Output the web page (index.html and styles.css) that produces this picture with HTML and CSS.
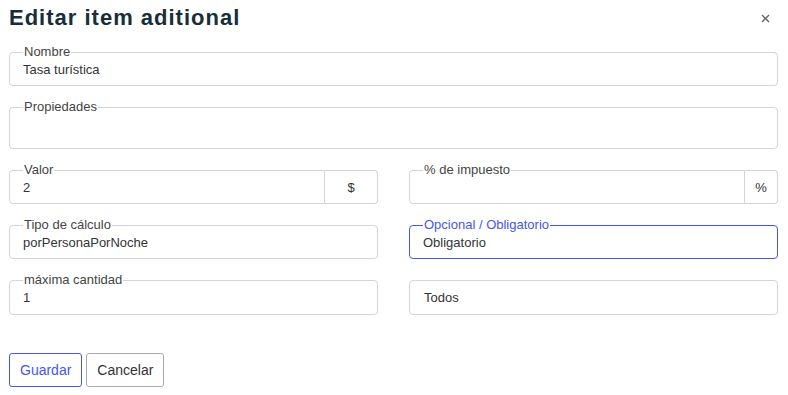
FILE: index.html
```html
<!DOCTYPE html>
<html>

<head>
    <meta charset="utf-8">
    <meta name="viewport" content="width=device-width,initial-scale=1.0">
    <title>Editar item aditional</title>
    <link rel="stylesheet" href="styles.css">
</head>

<body>
    <div id="dialog">
        <div class="header">
            <h1>Editar item aditional</h1>
            <button class="close" aria-label="Cerrar">
                <svg width="9" height="9" viewBox="0 0 9 9">
                    <path d="M1 1L8 8M8 1L1 8" stroke="#666" stroke-width="1.4" fill="none" />
                </svg>
            </button>
        </div>

        <div class="form">
            <fieldset class="field full">
                <legend>Nombre</legend>
                <div class="value">Tasa turística</div>
            </fieldset>

            <fieldset class="field full tall">
                <legend>Propiedades</legend>
                <div class="value"></div>
            </fieldset>

            <div class="group">
                <fieldset class="field">
                    <legend>Valor</legend>
                    <div class="value">2</div>
                </fieldset>
                <span class="addon dollar">$</span>
            </div>

            <div class="group">
                <fieldset class="field">
                    <legend>% de impuesto</legend>
                    <div class="value"></div>
                </fieldset>
                <span class="addon pct">%</span>
            </div>

            <fieldset class="field">
                <legend>Tipo de cálculo</legend>
                <div class="value">porPersonaPorNoche</div>
            </fieldset>

            <fieldset class="field active">
                <legend>Opcional / Obligatorio</legend>
                <div class="value">Obligatorio</div>
            </fieldset>

            <fieldset class="field">
                <legend>máxima cantidad</legend>
                <div class="value">1</div>
            </fieldset>

            <div class="plain">Todos</div>
        </div>

        <div class="actions">
            <button class="btn primary">Guardar</button>
            <button class="btn">Cancelar</button>
        </div>
    </div>
</body>

</html>
```

FILE: styles.css
```css
html,
body {
    margin: 0;
    padding: 0;
    background: #fff;
}

body {
    font-family: "Liberation Sans", Arial, sans-serif;
    color: #333;
}

#dialog {
    padding: 0 10px 0 9px;
}

.header {
    display: flex;
    align-items: center;
    justify-content: space-between;
    height: 36px;
}

.header h1 {
    margin: 0;
    font-size: 22px;
    letter-spacing: 1px;
    font-weight: bold;
    color: #172e3a;
}

.close {
    border: 0;
    background: none;
    padding: 0;
    margin-right: 8px;
    display: flex;
    cursor: pointer;
}

.form {
    display: grid;
    grid-template-columns: 1fr 1fr;
    column-gap: 31px;
    row-gap: 14px;
    margin-top: 9px;
}

.full {
    grid-column: 1 / 3;
}

.field {
    margin: 0;
    min-width: 0;
    border: 1px solid #d3d3da;
    border-radius: 4px;
    padding: 0 13px 6px;
}

.field legend {
    padding: 0 1px;
    font-size: 13px;
    line-height: 14px;
    color: #444;
}

.value {
    padding-top: 2px;
    font-size: 13px;
    line-height: 18px;
    min-height: 18px;
    color: #333;
}

.tall .value {
    min-height: 26px;
}

.group {
    display: flex;
}

.group .field {
    flex: 1;
    border-top-right-radius: 0;
    border-bottom-right-radius: 0;
}

.addon {
    margin-top: 7px;
    display: flex;
    align-items: center;
    justify-content: center;
    border: 1px solid #d3d3da;
    border-left: 0;
    border-radius: 0 4px 4px 0;
    font-size: 13px;
    color: #333;
}

.dollar {
    width: 52px;
}

.pct {
    width: 32px;
}

.active {
    border-color: #4656f0;
}

.active legend {
    color: #4656f0;
}

.plain {
    margin-top: 7px;
    height: 33px;
    border: 1px solid #d3d3da;
    border-radius: 4px;
    padding: 0 14px;
    display: flex;
    align-items: center;
    font-size: 13px;
    color: #333;
}

.actions {
    display: flex;
    gap: 4px;
    margin-top: 38px;
}

.btn {
    height: 34px;
    padding: 0 10px;
    font-family: inherit;
    font-size: 14px;
    background: #fff;
    color: #333;
    border: 1px solid #aaa;
    border-radius: 3px;
}

.btn.primary {
    color: #4656f0;
    border-color: #4656f0;
}
```
